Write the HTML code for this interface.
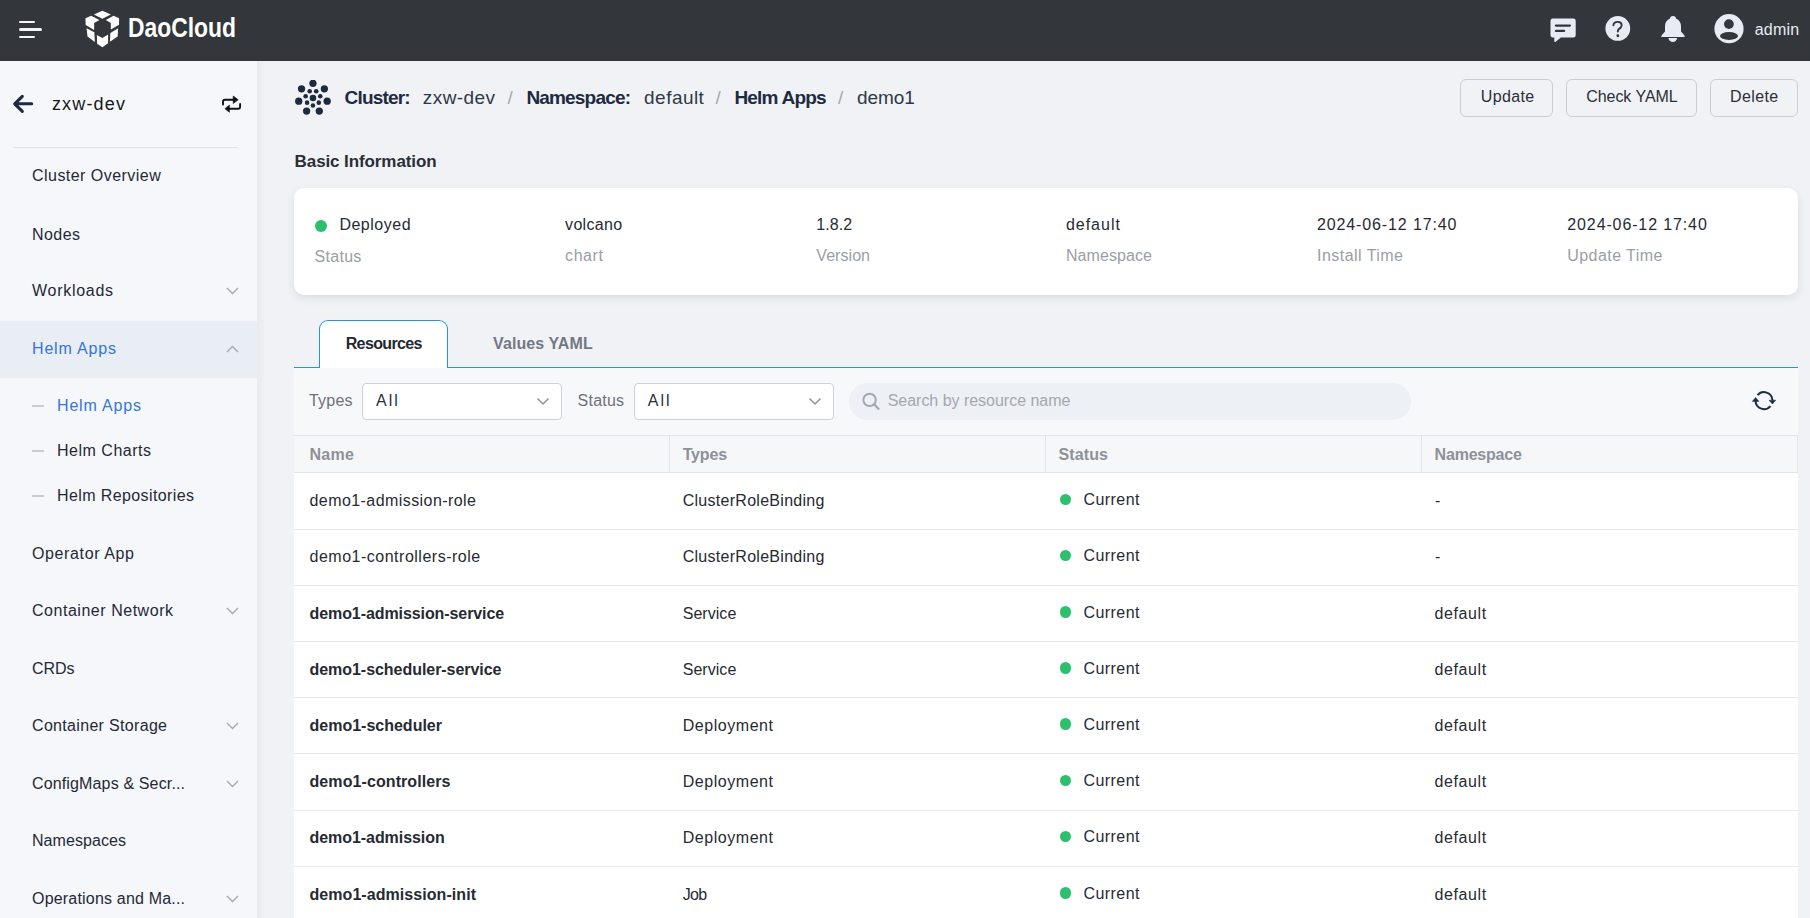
<!DOCTYPE html>
<html><head><meta charset="utf-8"><style>
html,body{margin:0;padding:0;width:1810px;height:918px;overflow:hidden;background:#f1f2f5;}
body{position:relative;font-family:"Liberation Sans",sans-serif;}
.r{position:absolute;display:block;}
.t{position:absolute;line-height:1;white-space:nowrap;}
</style></head><body>
<div class="r" style="left:0px;top:0px;width:1810px;height:61px;background:#33363b;"></div>
<div class="r" style="left:18.9px;top:20.9px;width:16.2px;height:2.1px;background:#f3f5fa;border-radius:1px;"></div>
<div class="r" style="left:18.9px;top:27.9px;width:23.1px;height:3.1px;background:#f3f5fa;border-radius:1.5px;"></div>
<div class="r" style="left:18.9px;top:35.9px;width:16.2px;height:2.1px;background:#f3f5fa;border-radius:1px;"></div>
<svg class="r" style="left:82px;top:8px;" width="40" height="42" viewBox="0 0 874 918"><g fill="#ffffff"><polygon points="260,140 445,62 630,140 445,235"/><polygon points="75,225 200,172 380,262 265,330 265,480 80,370"/><polygon points="520,262 690,172 810,225 810,365 630,470 630,330"/><polygon points="100,440 270,530 280,745 120,625"/><polygon points="790,440 620,545 610,740 780,625"/><polygon points="325,590 445,655 570,580 570,770 445,860 330,780"/></g></svg>
<svg class="r" style="left:126px;top:8px;" width="114" height="40" viewBox="0 0 114 40"><text x="2" y="29.4" font-family="Liberation Sans" font-weight="700" font-size="27.5" fill="#ffffff" textLength="108" lengthAdjust="spacingAndGlyphs">DaoCloud</text></svg>
<svg class="r" style="left:1548px;top:16px;" width="30" height="28" viewBox="0 0 30 28"><path d="M4.7 2.5 H25.5 A2.2 2.2 0 0 1 27.7 4.7 V19.3 A2.2 2.2 0 0 1 25.5 21.5 H12.9 L7.7 25.7 Q6.3 26.6 6.3 25 V21.5 H4.7 A2.2 2.2 0 0 1 2.5 19.3 V4.7 A2.2 2.2 0 0 1 4.7 2.5 Z" fill="#e8ebf2"/><rect x="6.8" y="8.45" width="16.2" height="2.2" rx="1.1" fill="#33363b"/><rect x="6.8" y="13.8" width="10.4" height="2.2" rx="1.1" fill="#33363b"/></svg>
<svg class="r" style="left:1603px;top:14px;" width="30" height="30" viewBox="0 0 30 30"><circle cx="14.8" cy="14.4" r="12.4" fill="#e8ebf2"/><path d="M10.4 11.3 C10.4 9.2 12.2 7.85 14.6 7.85 C17 7.85 18.65 9.3 18.65 11.3 C18.65 13.2 17.3 14.1 16.1 14.9 C15.2 15.5 14.8 16.3 14.8 17.6" fill="none" stroke="#33363b" stroke-width="1.9" stroke-linecap="round"/><circle cx="14.85" cy="21.8" r="1.45" fill="#33363b"/></svg>
<svg class="r" style="left:1655px;top:10px;" width="35" height="36" viewBox="0 0 35 36"><path d="M6.3 27.1 L29.6 27.1 Q29.9 26.0 29.1 25.1 L26.0 21.4 L26.0 16.0 C26.0 12.3 24.0 9.7 21.2 8.7 C21.0 7.0 19.8 5.9 18.0 5.9 C16.2 5.9 15.0 7.0 14.8 8.7 C12.0 9.7 10.0 12.3 10.0 16.0 L10.0 21.4 L6.9 25.1 Q6.1 26.0 6.3 27.1 Z" fill="#e8ebf2"/><path d="M13.5 27.9 H22.1 A4.3 4.1 0 0 1 13.5 27.9 Z" fill="#e8ebf2"/></svg>
<svg class="r" style="left:1713px;top:13px;" width="32" height="32" viewBox="0 0 32 32"><circle cx="16" cy="15.7" r="14.6" fill="#e8ebf2"/><circle cx="15.9" cy="11.1" r="4.9" fill="#33363b"/><ellipse cx="16" cy="23" rx="9" ry="3.9" fill="#33363b"/></svg>
<div class="t" style="left:1754.70px;top:21.60px;font-size:16px;color:#e8ebf2;letter-spacing:0.230px;">admin</div>
<div class="r" style="left:0px;top:61px;width:257px;height:857px;background:#f6f7fb;"></div>
<svg class="r" style="left:8px;top:88px;" width="30" height="30" viewBox="0 0 30 30"><path d="M23.7 15.8 H7.5 M14.3 8.3 L6.7 15.8 L14.3 23.3" fill="none" stroke="#1d2b41" stroke-width="3.1" stroke-linecap="round" stroke-linejoin="round"/></svg>
<div class="t" style="left:51.90px;top:95.00px;font-size:18px;color:#161a21;letter-spacing:1.164px;">zxw-dev</div>
<svg class="r" style="left:216px;top:90px;" width="30" height="28" viewBox="0 0 30 28"><path d="M7 14.6 V11.8 Q7 9.8 9 9.8 H17.8" fill="none" stroke="#111" stroke-width="1.9" stroke-linecap="round"/><path d="M17.2 6 L22.2 9.8 L17.2 13.5z" fill="#111" stroke="#111" stroke-width="0.6" stroke-linejoin="round"/><path d="M24.1 14 V16.7 Q24.1 18.7 22.1 18.7 H13" fill="none" stroke="#111" stroke-width="1.9" stroke-linecap="round"/><path d="M13.4 15.1 L8.9 18.7 L13.4 22.3z" fill="#111" stroke="#111" stroke-width="0.6" stroke-linejoin="round"/></svg>
<div class="r" style="left:13px;top:147px;width:225px;height:1px;background:#dfe2e8;"></div>
<div class="t" style="left:32.00px;top:168.40px;font-size:16px;color:#1f2937;letter-spacing:0.460px;">Cluster Overview</div>
<div class="t" style="left:32.00px;top:226.50px;font-size:16px;color:#1f2937;letter-spacing:0.438px;">Nodes</div>
<div class="t" style="left:32.00px;top:283.00px;font-size:16px;color:#1f2937;letter-spacing:0.714px;">Workloads</div>
<svg class="r" style="left:225.5px;top:287px;" width="13" height="8" viewBox="0 0 13 8"><path d="M1 1 L6.5 6.5 L12 1" fill="none" stroke="#a5aab2" stroke-width="1.4"/></svg>
<div class="r" style="left:0px;top:321.3px;width:257px;height:56.3px;background:#e9edf4;"></div>
<div class="t" style="left:32.00px;top:341.00px;font-size:16px;color:#3276d6;letter-spacing:0.829px;">Helm Apps</div>
<svg class="r" style="left:225.5px;top:344.6px;" width="13" height="8" viewBox="0 0 13 8"><path d="M1 7 L6.5 1.5 L12 7" fill="none" stroke="#a5aab2" stroke-width="1.4"/></svg>
<div class="r" style="left:32px;top:405.4px;width:12px;height:2px;background:#c8ccd3;"></div>
<div class="t" style="left:57.00px;top:398.40px;font-size:16px;color:#3276d6;letter-spacing:0.829px;">Helm Apps</div>
<div class="r" style="left:32px;top:450.4px;width:12px;height:2px;background:#c8ccd3;"></div>
<div class="t" style="left:57.00px;top:443.40px;font-size:16px;color:#1f2937;letter-spacing:0.509px;">Helm Charts</div>
<div class="r" style="left:32px;top:495.1px;width:12px;height:2px;background:#c8ccd3;"></div>
<div class="t" style="left:57.00px;top:488.10px;font-size:16px;color:#1f2937;letter-spacing:0.393px;">Helm Repositories</div>
<div class="t" style="left:32.00px;top:546.20px;font-size:16px;color:#1f2937;letter-spacing:0.621px;">Operator App</div>
<div class="t" style="left:32.00px;top:603.20px;font-size:16px;color:#1f2937;letter-spacing:0.531px;">Container Network</div>
<svg class="r" style="left:225.5px;top:607.2px;" width="13" height="8" viewBox="0 0 13 8"><path d="M1 1 L6.5 6.5 L12 1" fill="none" stroke="#a5aab2" stroke-width="1.4"/></svg>
<div class="t" style="left:32.00px;top:660.90px;font-size:16px;color:#1f2937;letter-spacing:-0.055px;">CRDs</div>
<div class="t" style="left:32.00px;top:717.80px;font-size:16px;color:#1f2937;letter-spacing:0.321px;">Container Storage</div>
<svg class="r" style="left:225.5px;top:721.8px;" width="13" height="8" viewBox="0 0 13 8"><path d="M1 1 L6.5 6.5 L12 1" fill="none" stroke="#a5aab2" stroke-width="1.4"/></svg>
<div class="t" style="left:32.00px;top:775.90px;font-size:16px;color:#1f2937;letter-spacing:0.143px;">ConfigMaps &amp; Secr...</div>
<svg class="r" style="left:225.5px;top:779.9px;" width="13" height="8" viewBox="0 0 13 8"><path d="M1 1 L6.5 6.5 L12 1" fill="none" stroke="#a5aab2" stroke-width="1.4"/></svg>
<div class="t" style="left:32.00px;top:832.80px;font-size:16px;color:#1f2937;letter-spacing:0.069px;">Namespaces</div>
<div class="t" style="left:32.00px;top:890.90px;font-size:16px;color:#1f2937;letter-spacing:0.189px;">Operations and Ma...</div>
<svg class="r" style="left:225.5px;top:894.9px;" width="13" height="8" viewBox="0 0 13 8"><path d="M1 1 L6.5 6.5 L12 1" fill="none" stroke="#a5aab2" stroke-width="1.4"/></svg>
<div class="r" style="left:267px;top:61px;width:1543px;height:857px;background:#f1f2f5;"></div>
<div class="r" style="left:257px;top:61px;width:10px;height:857px;background:linear-gradient(90deg,#e9eaee,#f1f2f5);"></div>
<svg class="r" style="left:295px;top:80px;" width="36" height="36" viewBox="0 0 36 36"><circle cx="17.95" cy="17.95" r="3.3" fill="#1d2b41"/><circle cx="17.95" cy="3.35" r="3.65" fill="#1d2b41"/><circle cx="21.20" cy="11.19" r="2.3" fill="#1d2b41"/><circle cx="29.36" cy="8.85" r="3.65" fill="#1d2b41"/><circle cx="25.26" cy="16.28" r="2.3" fill="#1d2b41"/><circle cx="32.18" cy="21.20" r="3.65" fill="#1d2b41"/><circle cx="23.81" cy="22.63" r="2.3" fill="#1d2b41"/><circle cx="24.28" cy="31.10" r="3.65" fill="#1d2b41"/><circle cx="17.95" cy="25.45" r="2.3" fill="#1d2b41"/><circle cx="11.62" cy="31.10" r="3.65" fill="#1d2b41"/><circle cx="12.09" cy="22.63" r="2.3" fill="#1d2b41"/><circle cx="3.72" cy="21.20" r="3.65" fill="#1d2b41"/><circle cx="10.64" cy="16.28" r="2.3" fill="#1d2b41"/><circle cx="6.54" cy="8.85" r="3.65" fill="#1d2b41"/><circle cx="14.70" cy="11.19" r="2.3" fill="#1d2b41"/></svg>
<div class="t" style="left:344.60px;top:88.30px;font-size:19px;color:#1d2b41;font-weight:700;letter-spacing:-0.827px;">Cluster:</div>
<div class="t" style="left:422.80px;top:87.70px;font-size:19px;color:#2e3848;letter-spacing:0.436px;">zxw-dev</div>
<div class="t" style="left:507.40px;top:88.30px;font-size:19px;color:#a5a9b0;">/</div>
<div class="t" style="left:526.40px;top:88.30px;font-size:19px;color:#1d2b41;font-weight:700;letter-spacing:-0.817px;">Namespace:</div>
<div class="t" style="left:644.10px;top:87.70px;font-size:19px;color:#2e3848;letter-spacing:0.459px;">default</div>
<div class="t" style="left:715.40px;top:88.30px;font-size:19px;color:#a5a9b0;">/</div>
<div class="t" style="left:734.40px;top:88.30px;font-size:19px;color:#1d2b41;font-weight:700;letter-spacing:-0.792px;">Helm Apps</div>
<div class="t" style="left:838.00px;top:88.30px;font-size:19px;color:#a5a9b0;">/</div>
<div class="t" style="left:857.10px;top:87.70px;font-size:19px;color:#2e3848;letter-spacing:-0.099px;">demo1</div>
<div class="r" style="left:1460px;top:79px;width:93px;height:37.5px;border:1px solid #c9cdd4;border-radius:6px;box-sizing:border-box;"></div>
<div class="t" style="left:1480.80px;top:89.40px;font-size:16px;color:#2b2f38;letter-spacing:0.341px;">Update</div>
<div class="r" style="left:1566px;top:79px;width:131px;height:37.5px;border:1px solid #c9cdd4;border-radius:6px;box-sizing:border-box;"></div>
<div class="t" style="left:1586.20px;top:89.40px;font-size:16px;color:#2b2f38;letter-spacing:-0.043px;">Check YAML</div>
<div class="r" style="left:1710px;top:79px;width:88px;height:37.5px;border:1px solid #c9cdd4;border-radius:6px;box-sizing:border-box;"></div>
<div class="t" style="left:1730.00px;top:89.40px;font-size:16px;color:#2b2f38;letter-spacing:0.390px;">Delete</div>
<div class="t" style="left:294.60px;top:152.70px;font-size:17px;color:#2a2e36;font-weight:700;letter-spacing:-0.099px;">Basic Information</div>
<div class="r" style="left:294px;top:188px;width:1504px;height:107px;background:#fff;border-radius:10px;box-shadow:0 3px 10px rgba(0,0,0,0.09);"></div>
<div class="r" style="left:315.3px;top:219.7px;width:12px;height:12px;border-radius:6px;background:#2cc06c;"></div>
<div class="t" style="left:339.40px;top:217.40px;font-size:16px;color:#262a33;letter-spacing:0.514px;">Deployed</div>
<div class="t" style="left:314.60px;top:249.00px;font-size:16px;color:#9a9ea6;letter-spacing:0.268px;">Status</div>
<div class="t" style="left:565.10px;top:217.40px;font-size:16px;color:#262a33;letter-spacing:0.309px;">volcano</div>
<div class="t" style="left:565.10px;top:247.60px;font-size:16px;color:#9a9ea6;letter-spacing:0.557px;">chart</div>
<div class="t" style="left:816.30px;top:217.40px;font-size:16px;color:#262a33;letter-spacing:0.054px;">1.8.2</div>
<div class="t" style="left:816.30px;top:247.60px;font-size:16px;color:#9a9ea6;letter-spacing:0.055px;">Version</div>
<div class="t" style="left:1065.90px;top:217.40px;font-size:16px;color:#262a33;letter-spacing:0.993px;">default</div>
<div class="t" style="left:1065.90px;top:247.60px;font-size:16px;color:#9a9ea6;letter-spacing:0.078px;">Namespace</div>
<div class="t" style="left:1317.00px;top:217.40px;font-size:16px;color:#262a33;letter-spacing:0.878px;">2024-06-12 17:40</div>
<div class="t" style="left:1317.00px;top:247.60px;font-size:16px;color:#9a9ea6;letter-spacing:0.462px;">Install Time</div>
<div class="t" style="left:1567.30px;top:217.40px;font-size:16px;color:#262a33;letter-spacing:0.878px;">2024-06-12 17:40</div>
<div class="t" style="left:1567.30px;top:247.60px;font-size:16px;color:#9a9ea6;letter-spacing:0.429px;">Update Time</div>
<div class="r" style="left:294px;top:367px;width:1504px;height:1px;background:#2592e3;"></div>
<div class="r" style="left:319px;top:320px;width:129px;height:48px;background:#fff;border:1.5px solid #2592e3;border-bottom:none;border-radius:9px 9px 0 0;box-sizing:border-box;"></div>
<div class="t" style="left:345.70px;top:335.70px;font-size:16px;color:#222833;font-weight:700;letter-spacing:-0.628px;">Resources</div>
<div class="t" style="left:493.00px;top:335.70px;font-size:16px;color:#737884;font-weight:700;letter-spacing:0.098px;">Values YAML</div>
<div class="r" style="left:294px;top:368px;width:1504px;height:67px;background:#f7f8fa;"></div>
<div class="t" style="left:309.00px;top:393.10px;font-size:16px;color:#6d717a;letter-spacing:0.203px;">Types</div>
<div class="r" style="left:362px;top:383px;width:200px;height:37px;background:#fff;border:1px solid #cdd1d8;border-radius:4px;box-sizing:border-box;"></div>
<div class="t" style="left:376.00px;top:393.10px;font-size:16px;color:#2b2f38;letter-spacing:1.959px;">All</div>
<svg class="r" style="left:536px;top:397px;" width="14" height="9" viewBox="0 0 14 9"><path d="M1.5 1.5 L7 7 L12.5 1.5" fill="none" stroke="#8f939b" stroke-width="1.5"/></svg>
<div class="t" style="left:577.60px;top:393.10px;font-size:16px;color:#6d717a;letter-spacing:0.208px;">Status</div>
<div class="r" style="left:634px;top:383px;width:200px;height:37px;background:#fff;border:1px solid #cdd1d8;border-radius:4px;box-sizing:border-box;"></div>
<div class="t" style="left:647.80px;top:393.10px;font-size:16px;color:#2b2f38;letter-spacing:1.959px;">All</div>
<svg class="r" style="left:808px;top:397px;" width="14" height="9" viewBox="0 0 14 9"><path d="M1.5 1.5 L7 7 L12.5 1.5" fill="none" stroke="#8f939b" stroke-width="1.5"/></svg>
<div class="r" style="left:849px;top:383px;width:562px;height:37px;background:#edf0f4;border-radius:18.5px;"></div>
<svg class="r" style="left:861px;top:391px;" width="20" height="20" viewBox="0 0 20 20"><circle cx="8.6" cy="8.9" r="6.2" fill="none" stroke="#a3a8b0" stroke-width="2"/><path d="M13.2 13.5 L17.5 17.8" stroke="#a3a8b0" stroke-width="2.2" stroke-linecap="round"/></svg>
<div class="t" style="left:887.70px;top:393.10px;font-size:16px;color:#a4a8af;letter-spacing:-0.023px;">Search by resource name</div>
<svg class="r" style="left:1748px;top:386px;" width="32" height="28" viewBox="0 0 32 28"><path d="M9.53 9.17 A8.45 8.45 0 0 1 24.45 14.2" fill="none" stroke="#1d2b41" stroke-width="2"/><path d="M7.55 15 A8.45 8.45 0 0 0 22.47 20.03" fill="none" stroke="#1d2b41" stroke-width="2"/><path d="M21.05 14.2 L27.76 14.2 L24.4 18z" fill="#1d2b41" stroke="#1d2b41" stroke-width="0.5" stroke-linejoin="round"/><path d="M4.3 15.4 L11 15.4 L7.6 11.4z" fill="#1d2b41" stroke="#1d2b41" stroke-width="0.5" stroke-linejoin="round"/></svg>
<div class="r" style="left:294px;top:435px;width:1504px;height:38px;background:#f6f7f9;border-top:1px solid #e1e4e9;border-bottom:1px solid #e1e4e9;box-sizing:border-box;"></div>
<div class="r" style="left:669px;top:435px;width:1px;height:38px;background:#e1e4e9;"></div>
<div class="r" style="left:1045px;top:435px;width:1px;height:38px;background:#e1e4e9;"></div>
<div class="r" style="left:1421px;top:435px;width:1px;height:38px;background:#e1e4e9;"></div>
<div class="r" style="left:1797px;top:435px;width:1px;height:38px;background:#e1e4e9;"></div>
<div class="t" style="left:309.50px;top:446.70px;font-size:16px;color:#8d9199;font-weight:700;letter-spacing:0.307px;">Name</div>
<div class="t" style="left:682.70px;top:446.70px;font-size:16px;color:#8d9199;font-weight:700;letter-spacing:-0.164px;">Types</div>
<div class="t" style="left:1058.60px;top:446.70px;font-size:16px;color:#8d9199;font-weight:700;letter-spacing:0.100px;">Status</div>
<div class="t" style="left:1434.60px;top:446.70px;font-size:16px;color:#8d9199;font-weight:700;letter-spacing:-0.206px;">Namespace</div>
<div class="r" style="left:294px;top:473px;width:1504px;height:445px;background:#fff;"></div>
<div class="t" style="left:309.50px;top:493.20px;font-size:16px;color:#262a33;letter-spacing:0.432px;">demo1-admission-role</div>
<div class="t" style="left:682.70px;top:493.20px;font-size:16px;color:#262a33;letter-spacing:0.279px;">ClusterRoleBinding</div>
<div class="r" style="left:1059.5px;top:493.50px;width:11.7px;height:11.7px;border-radius:6px;background:#2cc06c;"></div>
<div class="t" style="left:1083.50px;top:492.20px;font-size:16px;color:#262a33;letter-spacing:0.441px;">Current</div>
<div class="t" style="left:1435.00px;top:493.20px;font-size:16px;color:#262a33;">-</div>
<div class="r" style="left:294px;top:528.5px;width:1504px;height:1px;background:#e8eaee;"></div>
<div class="t" style="left:309.50px;top:549.40px;font-size:16px;color:#262a33;letter-spacing:0.507px;">demo1-controllers-role</div>
<div class="t" style="left:682.70px;top:549.40px;font-size:16px;color:#262a33;letter-spacing:0.279px;">ClusterRoleBinding</div>
<div class="r" style="left:1059.5px;top:549.70px;width:11.7px;height:11.7px;border-radius:6px;background:#2cc06c;"></div>
<div class="t" style="left:1083.50px;top:548.40px;font-size:16px;color:#262a33;letter-spacing:0.441px;">Current</div>
<div class="t" style="left:1435.00px;top:549.40px;font-size:16px;color:#262a33;">-</div>
<div class="r" style="left:294px;top:584.7px;width:1504px;height:1px;background:#e8eaee;"></div>
<div class="t" style="left:309.50px;top:605.60px;font-size:16px;color:#262a33;font-weight:700;letter-spacing:-0.083px;">demo1-admission-service</div>
<div class="t" style="left:682.70px;top:605.60px;font-size:16px;color:#262a33;letter-spacing:0.041px;">Service</div>
<div class="r" style="left:1059.5px;top:605.90px;width:11.7px;height:11.7px;border-radius:6px;background:#2cc06c;"></div>
<div class="t" style="left:1083.50px;top:604.60px;font-size:16px;color:#262a33;letter-spacing:0.441px;">Current</div>
<div class="t" style="left:1434.60px;top:605.60px;font-size:16px;color:#262a33;letter-spacing:0.577px;">default</div>
<div class="r" style="left:294px;top:640.9px;width:1504px;height:1px;background:#e8eaee;"></div>
<div class="t" style="left:309.50px;top:661.80px;font-size:16px;color:#262a33;font-weight:700;letter-spacing:-0.044px;">demo1-scheduler-service</div>
<div class="t" style="left:682.70px;top:661.80px;font-size:16px;color:#262a33;letter-spacing:0.041px;">Service</div>
<div class="r" style="left:1059.5px;top:662.10px;width:11.7px;height:11.7px;border-radius:6px;background:#2cc06c;"></div>
<div class="t" style="left:1083.50px;top:660.80px;font-size:16px;color:#262a33;letter-spacing:0.441px;">Current</div>
<div class="t" style="left:1434.60px;top:661.80px;font-size:16px;color:#262a33;letter-spacing:0.577px;">default</div>
<div class="r" style="left:294px;top:697.1px;width:1504px;height:1px;background:#e8eaee;"></div>
<div class="t" style="left:309.50px;top:718.00px;font-size:16px;color:#262a33;font-weight:700;">demo1-scheduler</div>
<div class="t" style="left:682.70px;top:718.00px;font-size:16px;color:#262a33;letter-spacing:0.547px;">Deployment</div>
<div class="r" style="left:1059.5px;top:718.30px;width:11.7px;height:11.7px;border-radius:6px;background:#2cc06c;"></div>
<div class="t" style="left:1083.50px;top:717.00px;font-size:16px;color:#262a33;letter-spacing:0.441px;">Current</div>
<div class="t" style="left:1434.60px;top:718.00px;font-size:16px;color:#262a33;letter-spacing:0.577px;">default</div>
<div class="r" style="left:294px;top:753.3px;width:1504px;height:1px;background:#e8eaee;"></div>
<div class="t" style="left:309.50px;top:774.20px;font-size:16px;color:#262a33;font-weight:700;letter-spacing:0.088px;">demo1-controllers</div>
<div class="t" style="left:682.70px;top:774.20px;font-size:16px;color:#262a33;letter-spacing:0.547px;">Deployment</div>
<div class="r" style="left:1059.5px;top:774.50px;width:11.7px;height:11.7px;border-radius:6px;background:#2cc06c;"></div>
<div class="t" style="left:1083.50px;top:773.20px;font-size:16px;color:#262a33;letter-spacing:0.441px;">Current</div>
<div class="t" style="left:1434.60px;top:774.20px;font-size:16px;color:#262a33;letter-spacing:0.577px;">default</div>
<div class="r" style="left:294px;top:809.5px;width:1504px;height:1px;background:#e8eaee;"></div>
<div class="t" style="left:309.50px;top:830.40px;font-size:16px;color:#262a33;font-weight:700;letter-spacing:-0.059px;">demo1-admission</div>
<div class="t" style="left:682.70px;top:830.40px;font-size:16px;color:#262a33;letter-spacing:0.547px;">Deployment</div>
<div class="r" style="left:1059.5px;top:830.70px;width:11.7px;height:11.7px;border-radius:6px;background:#2cc06c;"></div>
<div class="t" style="left:1083.50px;top:829.40px;font-size:16px;color:#262a33;letter-spacing:0.441px;">Current</div>
<div class="t" style="left:1434.60px;top:830.40px;font-size:16px;color:#262a33;letter-spacing:0.577px;">default</div>
<div class="r" style="left:294px;top:865.7px;width:1504px;height:1px;background:#e8eaee;"></div>
<div class="t" style="left:309.50px;top:886.60px;font-size:16px;color:#262a33;font-weight:700;letter-spacing:0.060px;">demo1-admission-init</div>
<div class="t" style="left:682.70px;top:886.60px;font-size:16px;color:#262a33;letter-spacing:-0.648px;">Job</div>
<div class="r" style="left:1059.5px;top:886.90px;width:11.7px;height:11.7px;border-radius:6px;background:#2cc06c;"></div>
<div class="t" style="left:1083.50px;top:885.60px;font-size:16px;color:#262a33;letter-spacing:0.441px;">Current</div>
<div class="t" style="left:1434.60px;top:886.60px;font-size:16px;color:#262a33;letter-spacing:0.577px;">default</div>
<div class="r" style="left:1798px;top:473px;width:12px;height:445px;background:#f1f2f5;"></div>
</body></html>
